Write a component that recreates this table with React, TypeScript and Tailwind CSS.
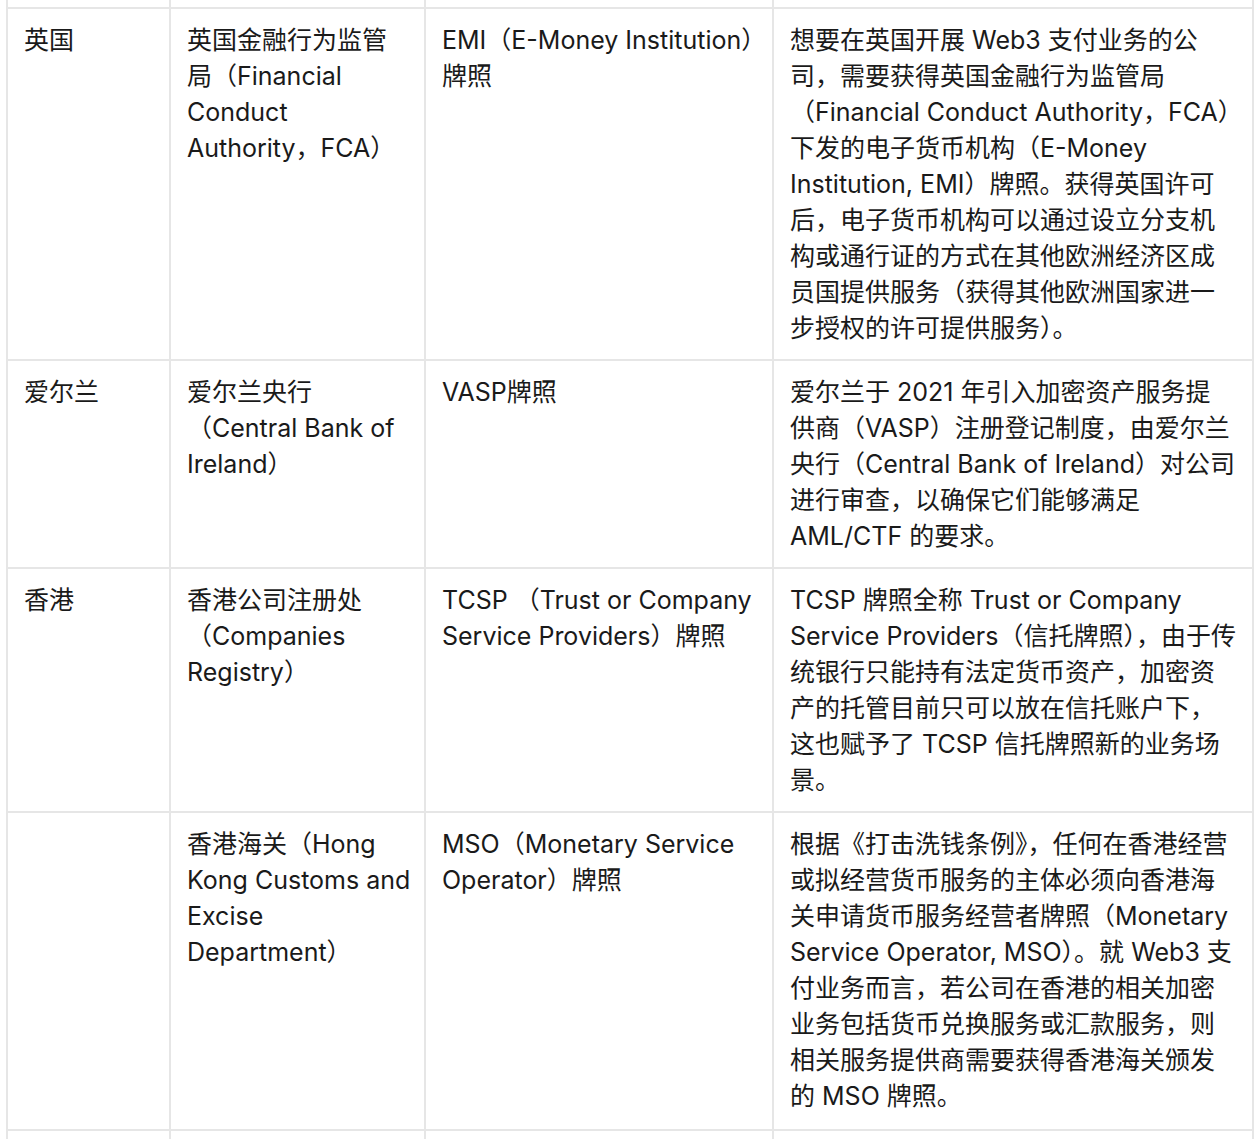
const rows: string[][][] = [
  [
    ["英国"],
    ["英国金融行为监管", "局（Financial", "Conduct", "Authority，FCA）"],
    ["EMI（E-Money Institution）", "牌照"],
    [
      "想要在英国开展 Web3 支付业务的公",
      "司，需要获得英国金融行为监管局",
      "（Financial Conduct Authority，FCA）",
      "下发的电子货币机构（E-Money",
      "Institution, EMI）牌照。获得英国许可",
      "后，电子货币机构可以通过设立分支机",
      "构或通行证的方式在其他欧洲经济区成",
      "员国提供服务（获得其他欧洲国家进一",
      "步授权的许可提供服务）。",
    ],
  ],
  [
    ["爱尔兰"],
    ["爱尔兰央行", "（Central Bank of", "Ireland）"],
    ["VASP牌照"],
    [
      "爱尔兰于 2021 年引入加密资产服务提",
      "供商（VASP）注册登记制度，由爱尔兰",
      "央行（Central Bank of Ireland）对公司",
      "进行审查，以确保它们能够满足",
      "AML/CTF 的要求。",
    ],
  ],
  [
    ["香港"],
    ["香港公司注册处", "（Companies", "Registry）"],
    ["TCSP （Trust or Company", "Service Providers）牌照"],
    [
      "TCSP 牌照全称 Trust or Company",
      "Service Providers（信托牌照），由于传",
      "统银行只能持有法定货币资产，加密资",
      "产的托管目前只可以放在信托账户下，",
      "这也赋予了 TCSP 信托牌照新的业务场",
      "景。",
    ],
  ],
  [
    [],
    ["香港海关（Hong", "Kong Customs and", "Excise", "Department）"],
    ["MSO（Monetary Service", "Operator）牌照"],
    [
      "根据《打击洗钱条例》，任何在香港经营",
      "或拟经营货币服务的主体必须向香港海",
      "关申请货币服务经营者牌照（Monetary",
      "Service Operator, MSO）。就 Web3 支",
      "付业务而言，若公司在香港的相关加密",
      "业务包括货币兑换服务或汇款服务，则",
      "相关服务提供商需要获得香港海关颁发",
      "的 MSO 牌照。",
    ],
  ],
];

function Cell({ lines, last }: { lines: string[]; last: boolean }) {
  return (
    <td
      className={
        last
          ? "border-2 border-[#e6e6e6] px-4 pt-[13px] pb-[15px] align-top whitespace-nowrap overflow-hidden"
          : "border-2 border-[#e6e6e6] px-4 py-[13px] align-top whitespace-nowrap overflow-hidden"
      }
    >
      {lines.map((line, i) => (
        <div key={i}>{line}</div>
      ))}
    </td>
  );
}

export default function App() {
  return (
    <div
      className="h-[1139px] overflow-hidden bg-white pl-[6px] text-[25px] leading-[36px] text-[#1a1a1a]"
      style={{ fontFamily: 'Inter, "Noto Sans CJK SC", sans-serif' }}
    >
      <table className="w-[1246px] table-fixed border-collapse">
        <colgroup>
          <col className="w-[163px]" />
          <col className="w-[255px]" />
          <col className="w-[348px]" />
          <col className="w-[480px]" />
        </colgroup>
        <tbody>
          <tr className="h-[8px]">
            {[0, 1, 2, 3].map((i) => (
              <td key={i} className="border-2 border-t-0 border-[#e6e6e6] p-0"></td>
            ))}
          </tr>
          {rows.map((row, r) => (
            <tr key={r}>
              {row.map((lines, c) => (
                <Cell key={c} lines={lines} last={r === rows.length - 1} />
              ))}
            </tr>
          ))}
          <tr className="h-[40px]">
            {[0, 1, 2, 3].map((i) => (
              <td key={i} className="border-2 border-[#e6e6e6] p-0"></td>
            ))}
          </tr>
        </tbody>
      </table>
    </div>
  );
}
